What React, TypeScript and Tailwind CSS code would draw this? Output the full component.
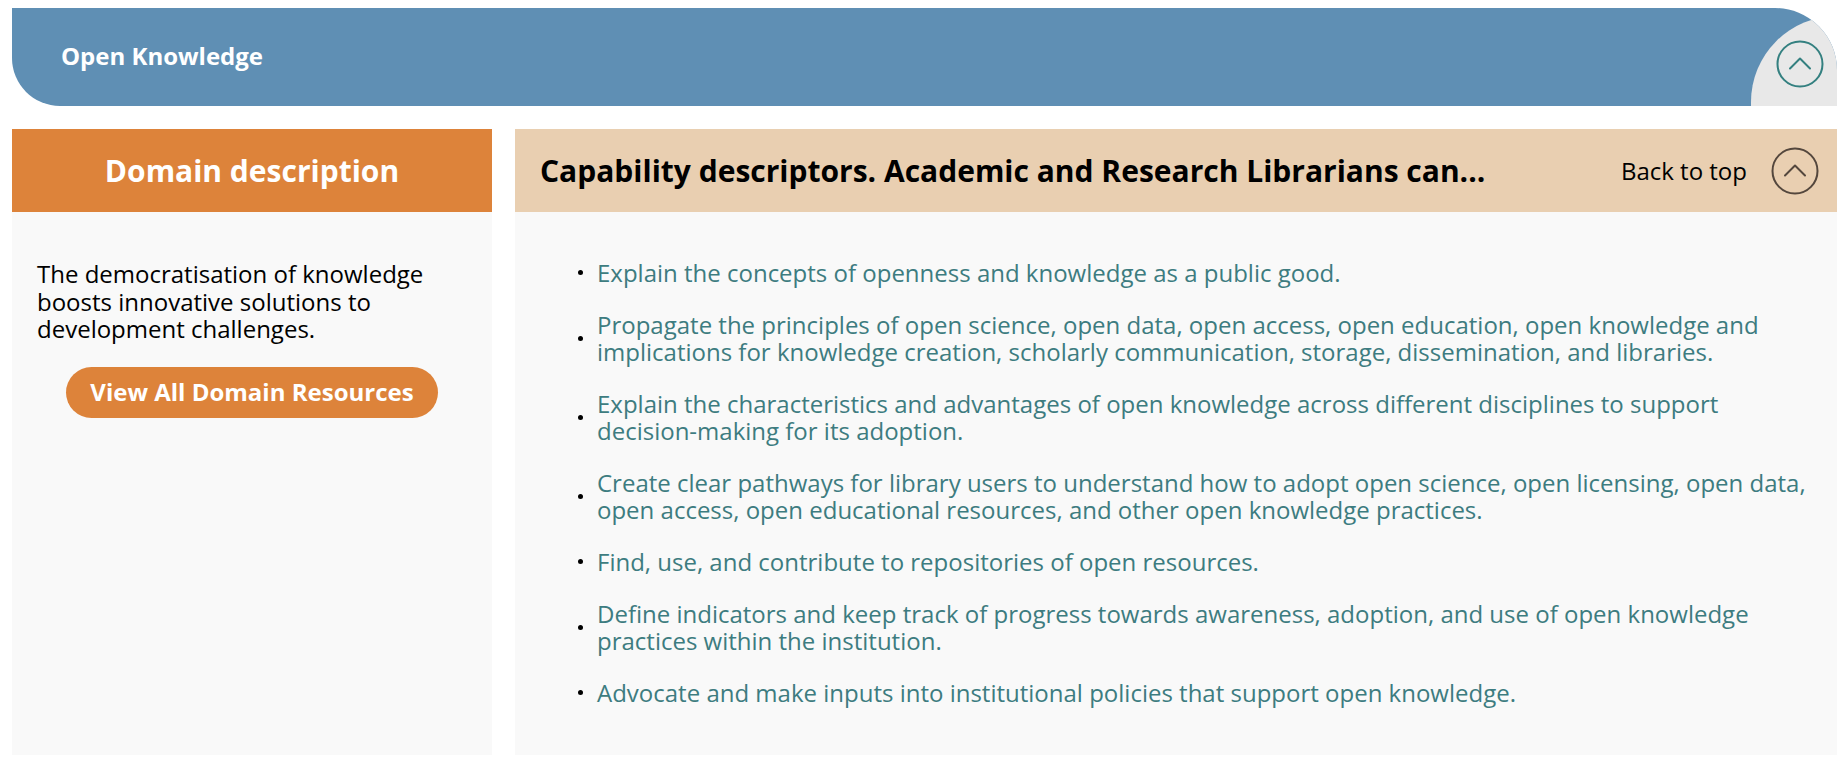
import React from 'react';

const items = [
  'Explain the concepts of openness and knowledge as a public good.',
  'Propagate the principles of open science, open data, open access, open education, open knowledge and implications for knowledge creation, scholarly communication, storage, dissemination, and libraries.',
  'Explain the characteristics and advantages of open knowledge across different disciplines to support decision-making for its adoption.',
  'Create clear pathways for library users to understand how to adopt open science, open licensing, open data, open access, open educational resources, and other open knowledge practices.',
  'Find, use, and contribute to repositories of open resources.',
  'Define indicators and keep track of progress towards awareness, adoption, and use of open knowledge practices within the institution.',
  'Advocate and make inputs into institutional policies that support open knowledge.',
];

// round button with a thin up chevron
const UpCircle = ({ color }: { color: string }) => (
  <svg width="48" height="48" viewBox="0 0 48 48" fill="none" stroke={color} strokeWidth={2}>
    <circle cx="24" cy="24" r="22.5" />
    <polyline points="14,28.5 24,18.5 34,28.5" strokeLinecap="round" strokeLinejoin="round" />
  </svg>
);

export default function App() {
  return (
    <div className="min-h-screen bg-white pt-[8px] pl-[12px] pr-[7px] font-['Open_Sans',sans-serif]">
      {/* Domain header bar */}
      <div className="relative h-[98px] overflow-hidden rounded-tr-[62px] rounded-bl-[48px] bg-[#5f8fb4] flex items-center pl-[49px]">
        <h2 className="text-[24px] font-bold text-white pb-[2px]">Open Knowledge</h2>
        <div className="absolute right-0 bottom-0 w-[86px] h-[90px] rounded-tl-[86px] bg-[#e8e8e8] flex items-center justify-end pr-[13px] pt-[6px]">
          <UpCircle color="#348080" />
        </div>
      </div>

      <div className="mt-[23px] flex gap-[23px]">
        {/* Left column */}
        <div className="w-[480px] shrink-0 flex flex-col bg-[#f9f9f9]">
          <div className="h-[83px] bg-[#dd833a] flex items-center justify-center">
            <h3 className="text-[30px] font-bold text-white">Domain description</h3>
          </div>
          <div className="pt-[48px] px-[25px] pb-[40px] flex flex-col">
            <p className="text-[24px] leading-[27.5px] text-black">
              The democratisation of knowledge boosts innovative solutions to development challenges.
            </p>
            <button className="mt-[24px] self-center w-[372px] h-[51px] rounded-full bg-[#dd833a] text-white text-[24px] font-bold">
              View All Domain Resources
            </button>
          </div>
        </div>

        {/* Right column */}
        <div className="flex-1 flex flex-col bg-[#f9f9f9]">
          <div className="h-[83px] bg-[#e9cfb1] flex items-center justify-between pl-[25px] pr-[18px]">
            <h3 className="text-[30px] font-bold text-black">
              Capability descriptors. Academic and Research Librarians can...
            </h3>
            <div className="flex items-center gap-[24px]">
              <span className="text-[24px] text-black">Back to top</span>
              <UpCircle color="#54473d" />
            </div>
          </div>
          <ul className="pt-[47px] pb-[49px] pl-[63px] pr-[25px] flex flex-col gap-[25px]">
            {items.map((t) => (
              <li key={t} className="flex items-center gap-[14px]">
                <span className="w-[5px] h-[5px] shrink-0 rounded-full bg-black" />
                <span className="text-[24px] leading-[27px] text-[#3d7c80]">{t}</span>
              </li>
            ))}
          </ul>
        </div>
      </div>
    </div>
  );
}
